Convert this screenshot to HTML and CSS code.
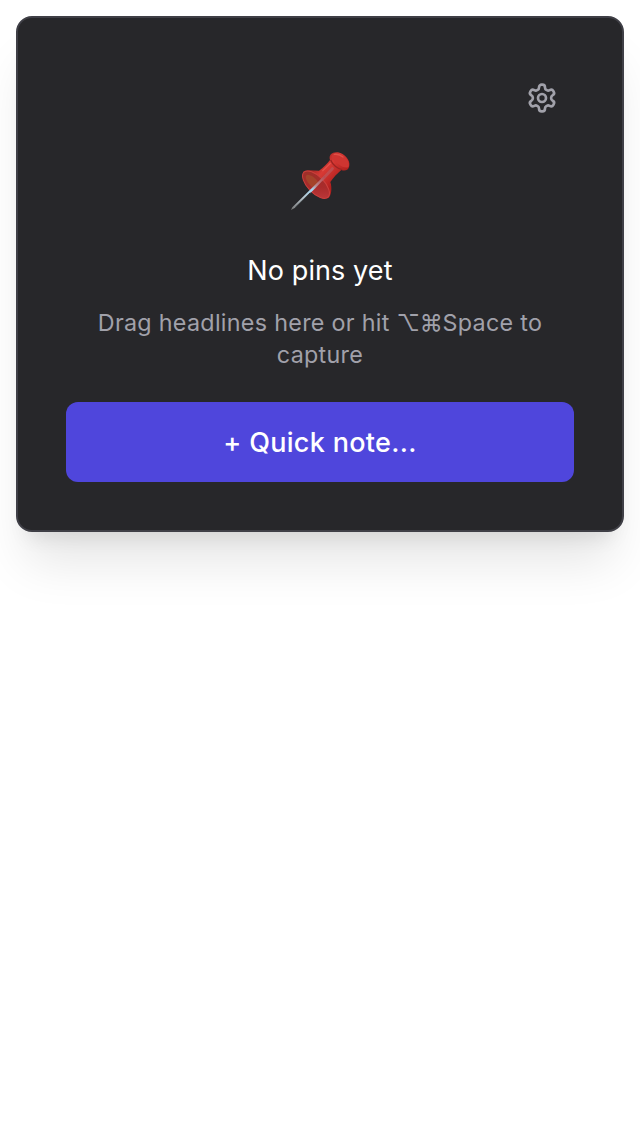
FILE: index.html
```html
<!DOCTYPE html>
<html lang="en">
<head>
<meta charset="utf-8">
<title>Pins</title>
<link rel="stylesheet" href="styles.css">
</head>
<body>
<main class="panel">
  <header class="toolbar">
    <button class="settings" aria-label="Settings">
      <svg class="gear" viewBox="0 0 24 24" fill="none" stroke="currentColor" stroke-width="2" stroke-linecap="round" stroke-linejoin="round">
        <path d="M12.22 2h-.44a2 2 0 0 0-2 2v.18a2 2 0 0 1-1 1.73l-.43.25a2 2 0 0 1-2 0l-.15-.08a2 2 0 0 0-2.73.73l-.22.38a2 2 0 0 0 .73 2.73l.15.1a2 2 0 0 1 1 1.72v.51a2 2 0 0 1-1 1.74l-.15.09a2 2 0 0 0-.73 2.73l.22.38a2 2 0 0 0 2.73.73l.15-.08a2 2 0 0 1 2 0l.43.25a2 2 0 0 1 1 1.73V20a2 2 0 0 0 2 2h.44a2 2 0 0 0 2-2v-.18a2 2 0 0 1 1-1.73l.43-.25a2 2 0 0 1 2 0l.15.08a2 2 0 0 0 2.73-.73l.22-.39a2 2 0 0 0-.73-2.73l-.15-.08a2 2 0 0 1-1-1.74v-.5a2 2 0 0 1 1-1.74l.15-.09a2 2 0 0 0 .73-2.73l-.22-.38a2 2 0 0 0-2.73-.73l-.15.08a2 2 0 0 1-2 0l-.43-.25a2 2 0 0 1-1-1.73V4a2 2 0 0 0-2-2z"/>
        <circle cx="12" cy="12" r="3"/>
      </svg>
    </button>
  </header>
  <svg class="pin" viewBox="0 0 240 240" aria-hidden="true">
    <defs>
      <linearGradient id="needle" x1="34" y1="209" x2="136" y2="108" gradientUnits="userSpaceOnUse">
        <stop offset="0" stop-color="#777"/>
        <stop offset=".35" stop-color="#b8c4cc"/>
        <stop offset=".6" stop-color="#a5d8f4"/>
        <stop offset=".72" stop-color="#b9898f"/>
        <stop offset="1" stop-color="#b8444a"/>
      </linearGradient>
      <linearGradient id="body" x1="112" y1="75" x2="165" y2="125" gradientUnits="userSpaceOnUse">
        <stop offset="0" stop-color="#a82724"/>
        <stop offset=".35" stop-color="#d83a35"/>
        <stop offset="1" stop-color="#b3211f"/>
      </linearGradient>
      <linearGradient id="dish" x1="75" y1="100" x2="145" y2="170" gradientUnits="userSpaceOnUse">
        <stop offset="0" stop-color="#9b3028"/>
        <stop offset=".55" stop-color="#a92b2b"/>
        <stop offset="1" stop-color="#c03a3d"/>
      </linearGradient>
    </defs>
    <path fill="url(#body)" d="M69 96C74 89 96 90 117 92C130 83 142 70 150 60C145 44 157 35 174 37C193 40 211 60 208 77C206 91 195 94 184 90C172 101 160 112 151 126C157 144 154 169 144 175C127 176 78 126 69 96Z"/>
    <path fill="#cf3531" d="M155 48C158 37 174 36 187 45C202 54 210 69 206 80C201 86 187 82 174 72C162 64 154 55 155 48Z"/>
    <path fill="none" stroke="#9c2422" stroke-width="4" d="M152 60C158 75 174 88 187 89"/>
    <ellipse cx="108" cy="134" rx="52" ry="25" transform="rotate(46 108 134)" fill="url(#dish)" stroke="#cb403d" stroke-width="3"/>
    <path fill="#a4502b" opacity=".65" d="M78 107C85 99 105 112 116 128L99 144C86 132 74 117 78 107Z"/>
    <path fill="none" stroke="#b95a61" stroke-width="9" stroke-linecap="round" opacity=".65" d="M126 119L157 86"/>
    <path fill="none" stroke="#f26a5d" stroke-width="4" stroke-linecap="round" opacity=".5" d="M128 92L151 70M163 43Q177 41 189 51"/>
    <path fill="url(#needle)" d="M33 210L37 202L101 139L132 108L137 112L106 145L44 204Z"/>
    <path fill="none" stroke="#33383b" stroke-width="3" d="M46 202L91 158"/>
  </svg>
  <h1 class="title">No pins yet</h1>
  <p class="hint"><span class="hint-line">Drag headlines here or hit <span class="key">⌥⌘</span>Space to</span> capture</p>
  <button class="quick-note">+ Quick note...</button>
</main>
</body>
</html>
```
FILE: styles.css
```css
* { box-sizing: border-box; }
body {
  margin: 0;
  padding: 16px;
  min-height: 1144px;
  background: #fff;
  font-family: Inter, "Liberation Sans", sans-serif;
}
.panel {
  display: flex;
  flex-direction: column;
  align-items: center;
  height: 516px;
  padding: 48px;
  border: 2px solid #3f3f46;
  border-radius: 16px;
  background: #27272a;
  box-shadow: 0 40px 50px -10px rgba(0, 0, 0, .1), 0 16px 20px -12px rgba(0, 0, 0, .1);
}
.toolbar {
  display: flex;
  justify-content: flex-end;
  width: 100%;
  padding: 16px 16px 10px;
}
button { border: 0; font: inherit; }
.settings {
  display: flex;
  padding: 0;
  background: none;
  color: #a1a1aa;
}
.gear { width: 32px; height: 32px; }
.pin { width: 80px; height: 80px; margin-top: 16px; flex: none; }
.title {
  margin: 31px 0 0;
  color: #fff;
  font-size: 27px;
  font-weight: 400;
  line-height: 40px;
  letter-spacing: .1px;
}
.hint {
  margin: 16px 0 0;
  color: #a1a1aa;
  font-size: 23.3px;
  line-height: 32px;
  letter-spacing: .3px;
  text-align: center;
}
.hint-line { display: block; white-space: nowrap; }
.key {
  font-size: 23px;
  letter-spacing: -.3px;
}
.quick-note {
  width: 100%;
  height: 80px;
  margin-top: 31px;
  border-radius: 12px;
  background: #4f46dc;
  color: #fff;
  font-size: 27px;
  font-weight: 450;
  letter-spacing: .3px;
}
```
